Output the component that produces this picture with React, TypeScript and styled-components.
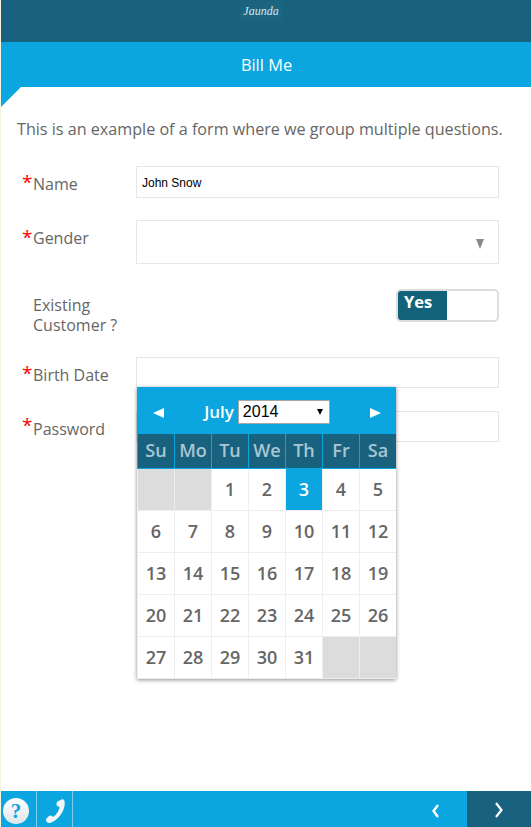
import { FC } from "react"
import styled, { createGlobalStyle } from "styled-components"

const BLUE = "#0ba5e0"
const DARK = "#19627f"
const TEXT = "#666666"
const LINE = "#e6e6e6"

const GlobalStyle = createGlobalStyle`
  html, body {
    margin: 0;
    padding: 0;
    background: #fff;
  }
  * {
    box-sizing: border-box;
  }
`

const Page = styled.div`
  width: 531px;
  height: 827px;
  display: flex;
  flex-direction: column;
  overflow: hidden;
  background: #fff;
  border-left: 1px solid #f8f4dc;
  font-family: "Open Sans", sans-serif;
  color: ${TEXT};
`

const TopBar = styled.header`
  height: 42px;
  flex: none;
  background: ${DARK};
  display: flex;
  justify-content: center;
  padding-right: 10px;
`

const Logo = styled.div`
  width: 43px;
  height: 20px;
  margin-top: 1px;
  background: #1b6580;
  color: #dce6ea;
  font: italic 12px/20px "Liberation Serif", serif;
  text-align: center;
`

const TitleBar = styled.div`
  position: relative;
  height: 45px;
  flex: none;
  background: ${BLUE};
  color: #fff;
  font-size: 16.4px;
  line-height: 46px;
  text-align: center;
  padding-left: 1px;

  &::after {
    content: "";
    position: absolute;
    left: 0;
    top: 100%;
    border-top: 20px solid ${BLUE};
    border-right: 20px solid transparent;
  }
`

const Content = styled.main`
  flex: 1;
  padding: 32px 32px 0 16px;
`

const Intro = styled.p`
  margin: 0 0 26px;
  font-size: 16.15px;
  line-height: 21px;
  white-space: nowrap;
`

const Row = styled.div<{ $gap: number; $height: number }>`
  display: grid;
  grid-template-columns: 119px 363px;
  height: ${(p) => p.$height}px;
  margin-bottom: ${(p) => p.$gap}px;
`

const Label = styled.label<{ $top: number }>`
  position: relative;
  padding: ${(p) => p.$top}px 0 0 16px;
  font-size: 16px;
  line-height: 20px;
`

const Star = styled.span<{ $top: number }>`
  position: absolute;
  left: 5px;
  top: ${(p) => p.$top}px;
  color: #ff0000;
  font-size: 19px;
  line-height: 24px;
`

const Input = styled.input`
  display: block;
  width: 100%;
  height: 100%;
  border: 1px solid ${LINE};
  background: #fff;
  padding: 1px 5px 0;
  outline: none;
  color: #000;
  font: 12px "Liberation Sans", sans-serif;
`

const FieldWrap = styled.div`
  position: relative;
`

const Caret = styled.span`
  position: absolute;
  right: 15px;
  top: 19px;
  width: 0;
  height: 0;
  border-left: 4.5px solid transparent;
  border-right: 4.5px solid transparent;
  border-top: 10px solid #888888;
`

const ToggleCell = styled.div`
  display: flex;
  justify-content: flex-end;
`

const Toggle = styled.div`
  width: 103px;
  height: 33px;
  border: 2px solid #dddddd;
  border-radius: 5px;
  overflow: hidden;
  background: #fff;
`

const ToggleOn = styled.div`
  width: 49px;
  height: 100%;
  background: #126379;
  color: #fff;
  font-size: 16.5px;
  font-weight: 700;
  line-height: 22px;
  padding-left: 6px;
`

const Calendar = styled.div`
  position: absolute;
  left: 1px;
  top: 30px;
  width: 259px;
  background: #fff;
  box-shadow: 0 1px 4px rgba(0, 0, 0, 0.45);
`

const CalHead = styled.div`
  height: 47px;
  background: ${BLUE};
  color: #fff;
  display: flex;
  align-items: center;
  justify-content: space-between;
  padding: 2px 15px 0 16px;
`

const Arrow = styled.span<{ $dir: "left" | "right" }>`
  width: 0;
  height: 0;
  margin-top: 2px;
  border-top: 5px solid transparent;
  border-bottom: 5px solid transparent;
  border-${(p) => (p.$dir === "left" ? "right" : "left")}: 11px solid #fff;
`

const MonthPicker = styled.div`
  display: flex;
  align-items: center;
  gap: 4px;
  font-size: 17px;
  font-weight: 600;
`

const YearBox = styled.div`
  position: relative;
  width: 92px;
  height: 24px;
`

const YearSelect = styled.select`
  appearance: none;
  display: block;
  width: 100%;
  height: 100%;
  border: 1px solid #a6a6a6;
  border-radius: 0;
  background: #fff;
  color: #000;
  padding: 0 0 0 4px;
  font: 16px "Liberation Sans", sans-serif;
`

const YearCaret = styled.span`
  position: absolute;
  right: 7px;
  top: 9px;
  width: 0;
  height: 0;
  border-left: 3.5px solid transparent;
  border-right: 3.5px solid transparent;
  border-top: 6px solid #000;
  pointer-events: none;
`

const Grid = styled.div`
  display: grid;
  grid-template-columns: repeat(7, 37px);
`

const DayName = styled.div`
  height: 35px;
  background: ${DARK};
  color: #a9c6d2;
  border: 1px solid ${BLUE};
  border-width: 0 0 1px 1px;
  font-size: 18px;
  font-weight: 600;
  line-height: 33px;
  text-align: center;
`

const Day = styled.div<{ $empty?: boolean; $active?: boolean }>`
  height: 42px;
  background: ${(p) => (p.$active ? BLUE : p.$empty ? "#dcdcdc" : "#fff")};
  color: ${(p) => (p.$active ? "#fff" : TEXT)};
  border: 1px solid #eeeeee;
  border-width: 0 0 1px 1px;
  font-size: 18px;
  font-weight: 600;
  line-height: 41px;
  text-align: center;
`

const Footer = styled.footer`
  height: 36px;
  flex: none;
  background: ${BLUE};
  display: flex;
  color: #fff;
`

const ToolButton = styled.div<{ $inset?: number }>`
  width: 36px;
  display: flex;
  align-items: center;
  justify-content: center;
  padding-right: ${(p) => p.$inset ?? 0}px;
  border-right: 1px solid #7fcdec;
`

const HelpIcon = styled.div`
  width: 26px;
  height: 26px;
  margin-top: 3px;
  border-radius: 50%;
  background: linear-gradient(#ffffff, #dfe6ea);
  color: ${BLUE};
  font: 700 21px/26px "Liberation Serif", serif;
  text-align: center;
`

const PhoneIcon = styled.svg`
  width: 20px;
  height: 24px;
  margin-top: 3px;
`

const Spacer = styled.div`
  flex: 1;
`

const NavButton = styled.div<{ $primary?: boolean }>`
  width: ${(p) => (p.$primary ? 64 : 62)}px;
  background: ${(p) => (p.$primary ? DARK : BLUE)};
  display: flex;
  align-items: center;
  justify-content: center;
  padding-top: ${(p) => (p.$primary ? 1 : 3)}px;
`

const WEEK_DAYS = ["Su", "Mo", "Tu", "We", "Th", "Fr", "Sa"]
const DAYS: (number | null)[] = [
  null, null,
  ...Array.from({ length: 31 }, (_, i) => i + 1),
  null, null,
]

const App: FC = () => (
  <Page>
    <GlobalStyle />
    <TopBar>
      <Logo>Jaunda</Logo>
    </TopBar>
    <TitleBar>Bill Me</TitleBar>
    <Content>
      <Intro>This is an example of a form where we group multiple questions.</Intro>

      <Row $height={32} $gap={22}>
        <Label $top={8}>
          <Star $top={4}>*</Star>
          Name
        </Label>
        <Input defaultValue="John Snow" />
      </Row>

      <Row $height={44} $gap={25}>
        <Label $top={8}>
          <Star $top={5}>*</Star>
          Gender
        </Label>
        <FieldWrap>
          <Input readOnly />
          <Caret />
        </FieldWrap>
      </Row>

      <Row $height={46} $gap={22}>
        <Label $top={6}>
          Existing
          <br />
          Customer ?
        </Label>
        <ToggleCell>
          <Toggle>
            <ToggleOn>Yes</ToggleOn>
          </Toggle>
        </ToggleCell>
      </Row>

      <Row $height={31} $gap={23}>
        <Label $top={8}>
          <Star $top={4}>*</Star>
          Birth Date
        </Label>
        <FieldWrap>
          <Input readOnly />
          <Calendar>
            <CalHead>
              <Arrow $dir="left" />
              <MonthPicker>
                July
                <YearBox>
                  <YearSelect defaultValue="2014">
                    <option>2013</option>
                    <option>2014</option>
                    <option>2015</option>
                  </YearSelect>
                  <YearCaret />
                </YearBox>
              </MonthPicker>
              <Arrow $dir="right" />
            </CalHead>
            <Grid>
              {WEEK_DAYS.map((d) => (
                <DayName key={d}>{d}</DayName>
              ))}
              {DAYS.map((d, i) => (
                <Day key={i} $empty={d === null} $active={d === 3}>
                  {d}
                </Day>
              ))}
            </Grid>
          </Calendar>
        </FieldWrap>
      </Row>

      <Row $height={31} $gap={0}>
        <Label $top={8}>
          <Star $top={2}>*</Star>
          Password
        </Label>
        <Input readOnly />
      </Row>
    </Content>
    <Footer>
      <ToolButton $inset={5}>
        <HelpIcon>?</HelpIcon>
      </ToolButton>
      <ToolButton>
        <PhoneIcon viewBox="0 0 20 24">
          <path
            d="M12.5 2.5 16.5 .5C18 0 19 .7 19.5 2 20.3 6 19 11 15.5 16 12.5 20 9 22.5 5 24 3.5 24 2.5 23.5 1.5 22.5 .8 21.5 .8 20.5 1.5 19.5L4 17C5 16.3 6 16.3 7 17L8 18C9.5 17.5 11.5 15 13 12.5 14 10.5 14.5 9 14.5 8L13 7.5C12 7 11.5 6 11.5 5 11.5 4 11.8 3 12.5 2.5Z"
            fill="#f2f6f8"
          />
        </PhoneIcon>
      </ToolButton>
      <Spacer />
      <NavButton>
        <svg width="10" height="14" viewBox="0 0 10 14">
          <path d="M7 1 2.5 7 7 13" fill="none" stroke="#fff" strokeWidth="2.4" />
        </svg>
      </NavButton>
      <NavButton $primary>
        <svg width="10" height="16" viewBox="0 0 10 16">
          <path d="M2 1 7.5 8 2 15" fill="none" stroke="#fff" strokeWidth="2.2" />
        </svg>
      </NavButton>
    </Footer>
  </Page>
)

export default App
